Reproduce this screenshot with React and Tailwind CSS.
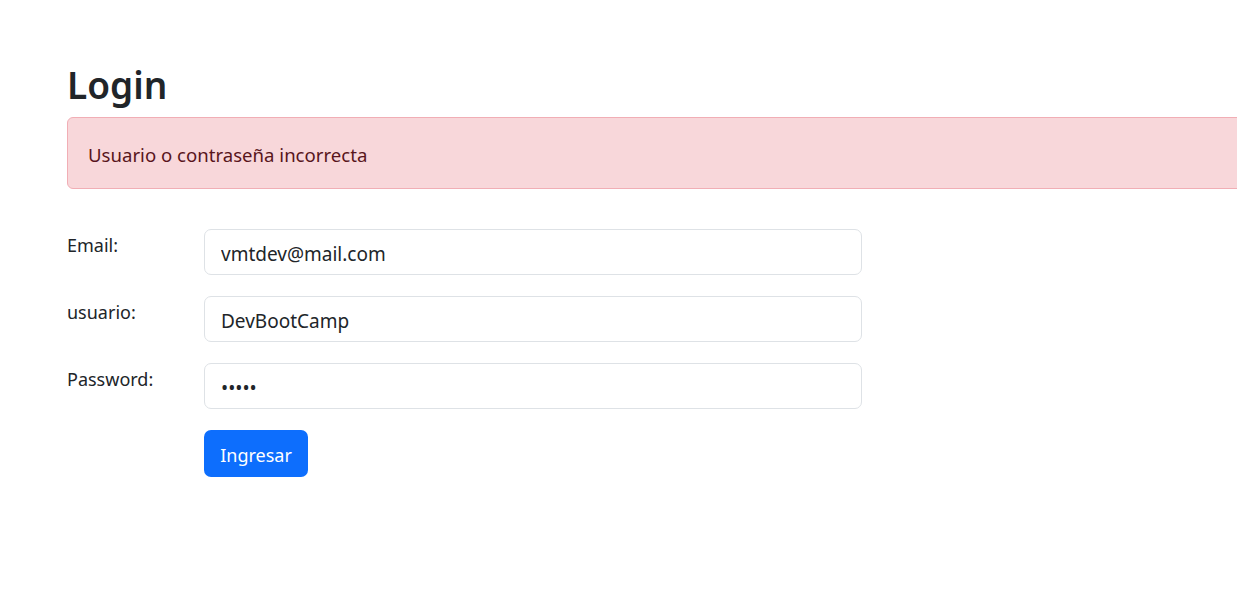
export default function App() {
  const font = { fontFamily: '"Segoe UI", "Noto Sans", "Open Sans", sans-serif' }
  return (
    <div className="min-h-[605px] w-[1237px] overflow-hidden bg-white text-[#212529]" style={font}>
      <div className="pl-[67px] pt-[63px]">
        <h1 className="text-[37px] font-semibold leading-[1.2] mb-[10px]">Login</h1>
        <div className="w-[1200px] h-[72px] rounded-[6px] border border-[#f1aeb5] bg-[#f8d7da] text-[#58151c] text-[18.6px] flex items-center px-[20px] pt-[3px]">
          Usuario o contraseña incorrecta
        </div>
        <form className="mt-[40px] flex flex-col gap-[21px]" onSubmit={e => e.preventDefault()}>
          <Row label="Email:" type="text" value="vmtdev@mail.com" />
          <Row label="usuario:" type="text" value="DevBootCamp" />
          <Row label="Password:" type="password" value="12345" />
          <div className="flex">
            <div className="w-[137px]" />
            <button className="h-[47px] w-[104px] rounded-[7px] bg-[#0d6efd] text-white text-[18px] pt-[3px]">Ingresar</button>
          </div>
        </form>
      </div>
    </div>
  )
}

function Row({ label, type, value }) {
  return (
    <div className="flex items-start">
      <label className="w-[137px] text-[18px] leading-[27px] pt-[3px]">{label}</label>
      <input type={type} defaultValue={value}
        className="w-[658px] h-[46px] rounded-[7px] border border-[#dee2e6] px-[16px] pt-[3px] text-[19px] text-[#212529] outline-none" />
    </div>
  )
}
